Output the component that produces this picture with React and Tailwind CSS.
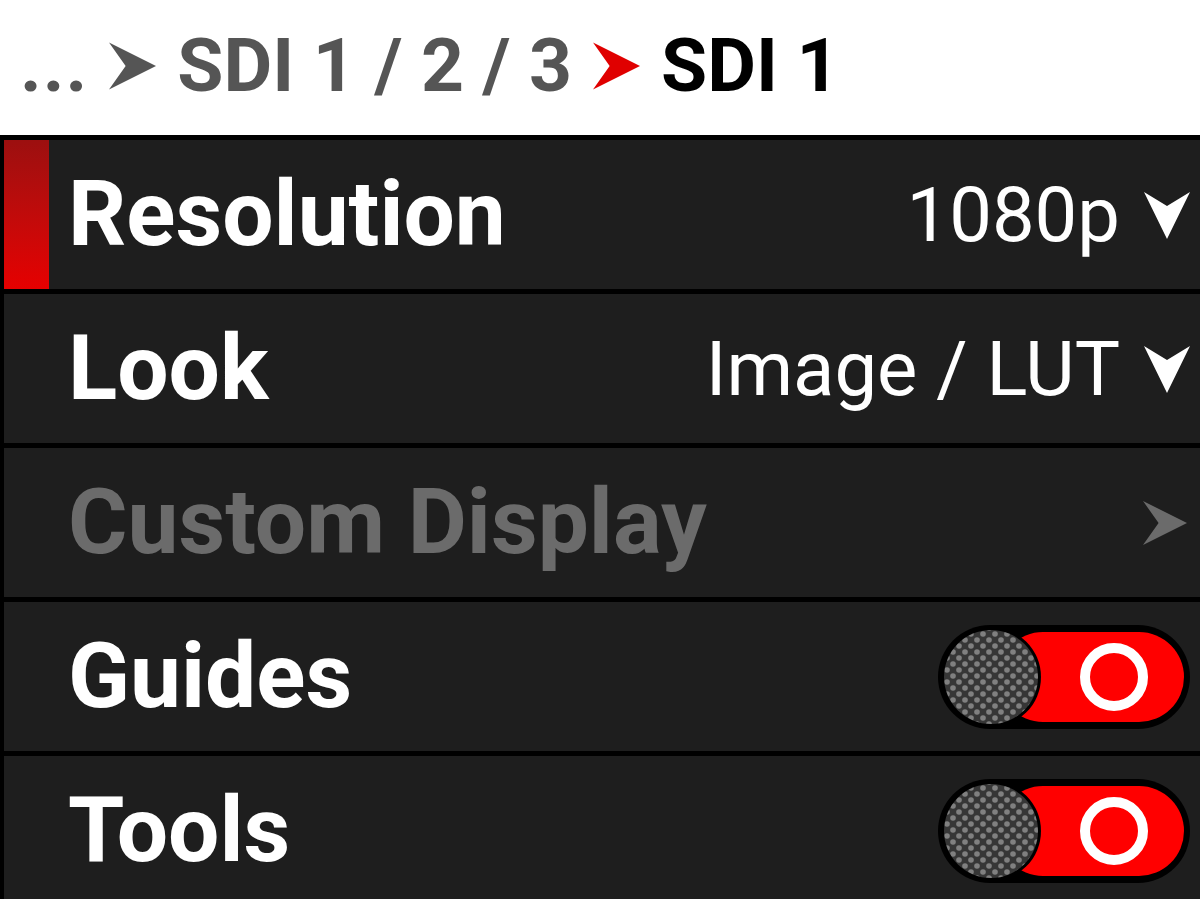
import { useId } from "react";

const font = { fontFamily: "Roboto, 'Noto Sans', sans-serif" };

function Dart({ color, className }) {
  // arrowhead pointing right
  return (
    <svg viewBox="0 0 48 48" className={className}>
      <polygon points="0,0 48,24 0,48 17,24" fill={color} />
    </svg>
  );
}

function DownDart() {
  return (
    <svg viewBox="0 0 46 48" className="w-[46px] h-[48px]">
      <polygon points="0,1 23,15 46,1 23,48" fill="#fff" />
    </svg>
  );
}

function Toggle() {
  const id = useId().replace(/:/g, "");
  return (
    <svg viewBox="0 0 252 104" className="w-[252px] h-[104px]">
      <defs>
        <pattern id={`dots${id}`} width="12" height="12" patternUnits="userSpaceOnUse">
          <rect width="12" height="12" fill="#363636" />
          <circle cx="3" cy="3" r="2.8" fill="#808080" />
          <circle cx="9" cy="9" r="2.8" fill="#808080" />
        </pattern>
      </defs>
      <rect x="0" y="0" width="252" height="104" rx="52" fill="#000" />
      <rect x="60" y="7" width="186" height="90" rx="45" fill="#ff0000" />
      <circle cx="53" cy="52" r="50" fill="#000" />
      <circle cx="53" cy="52" r="47" fill={`url(#dots${id})`} />
      <circle cx="176" cy="52" r="29" fill="none" stroke="#fff" strokeWidth="10" />
    </svg>
  );
}

function Row({ label, muted, active, children }) {
  return (
    <div className="h-[149px] bg-[#1e1e1e] flex items-center">
      {active ? (
        <div className="w-[45px] h-full bg-gradient-to-b from-[#9c0f0f] to-[#e60000]" />
      ) : (
        <div className="w-[45px] h-full" />
      )}
      <div
        className={`pl-[19px] font-bold text-[91px] leading-none ${muted ? "text-[#6b6b6b]" : "text-white"}`}
      >
        {label}
      </div>
      <div className="ml-auto flex items-center pr-[10px]">{children}</div>
    </div>
  );
}

export default function App() {
  return (
    <div className="w-[1200px] h-[899px] overflow-hidden bg-black" style={font}>
      <div className="h-[135px] bg-white flex items-center pl-[20px] pb-[4px] gap-[21px]">
        <span className="text-[75px] font-bold text-[#555] leading-none tracking-[1px]">...</span>
        <Dart color="#555" className="w-[47px] h-[48px]" />
        <span className="text-[75px] font-bold text-[#555] leading-none">SDI 1 / 2 / 3</span>
        <Dart color="#e00000" className="w-[47px] h-[48px]" />
        <span className="text-[75px] font-bold text-black leading-none">SDI 1</span>
      </div>
      <div className="pt-[5px] pl-[4px] flex flex-col gap-[5px]">
        <Row label="Resolution" active>
          <span className="text-[76px] text-white leading-none mr-[24px]">1080p</span>
          <DownDart />
        </Row>
        <Row label="Look">
          <span className="text-[76px] text-white leading-none mr-[24px]">Image / LUT</span>
          <DownDart />
        </Row>
        <Row label="Custom Display" muted>
          <Dart color="#6b6b6b" className="w-[44px] h-[44px] mr-[3px]" />
        </Row>
        <Row label="Guides">
          <Toggle />
        </Row>
        <Row label="Tools">
          <Toggle />
        </Row>
      </div>
    </div>
  );
}
